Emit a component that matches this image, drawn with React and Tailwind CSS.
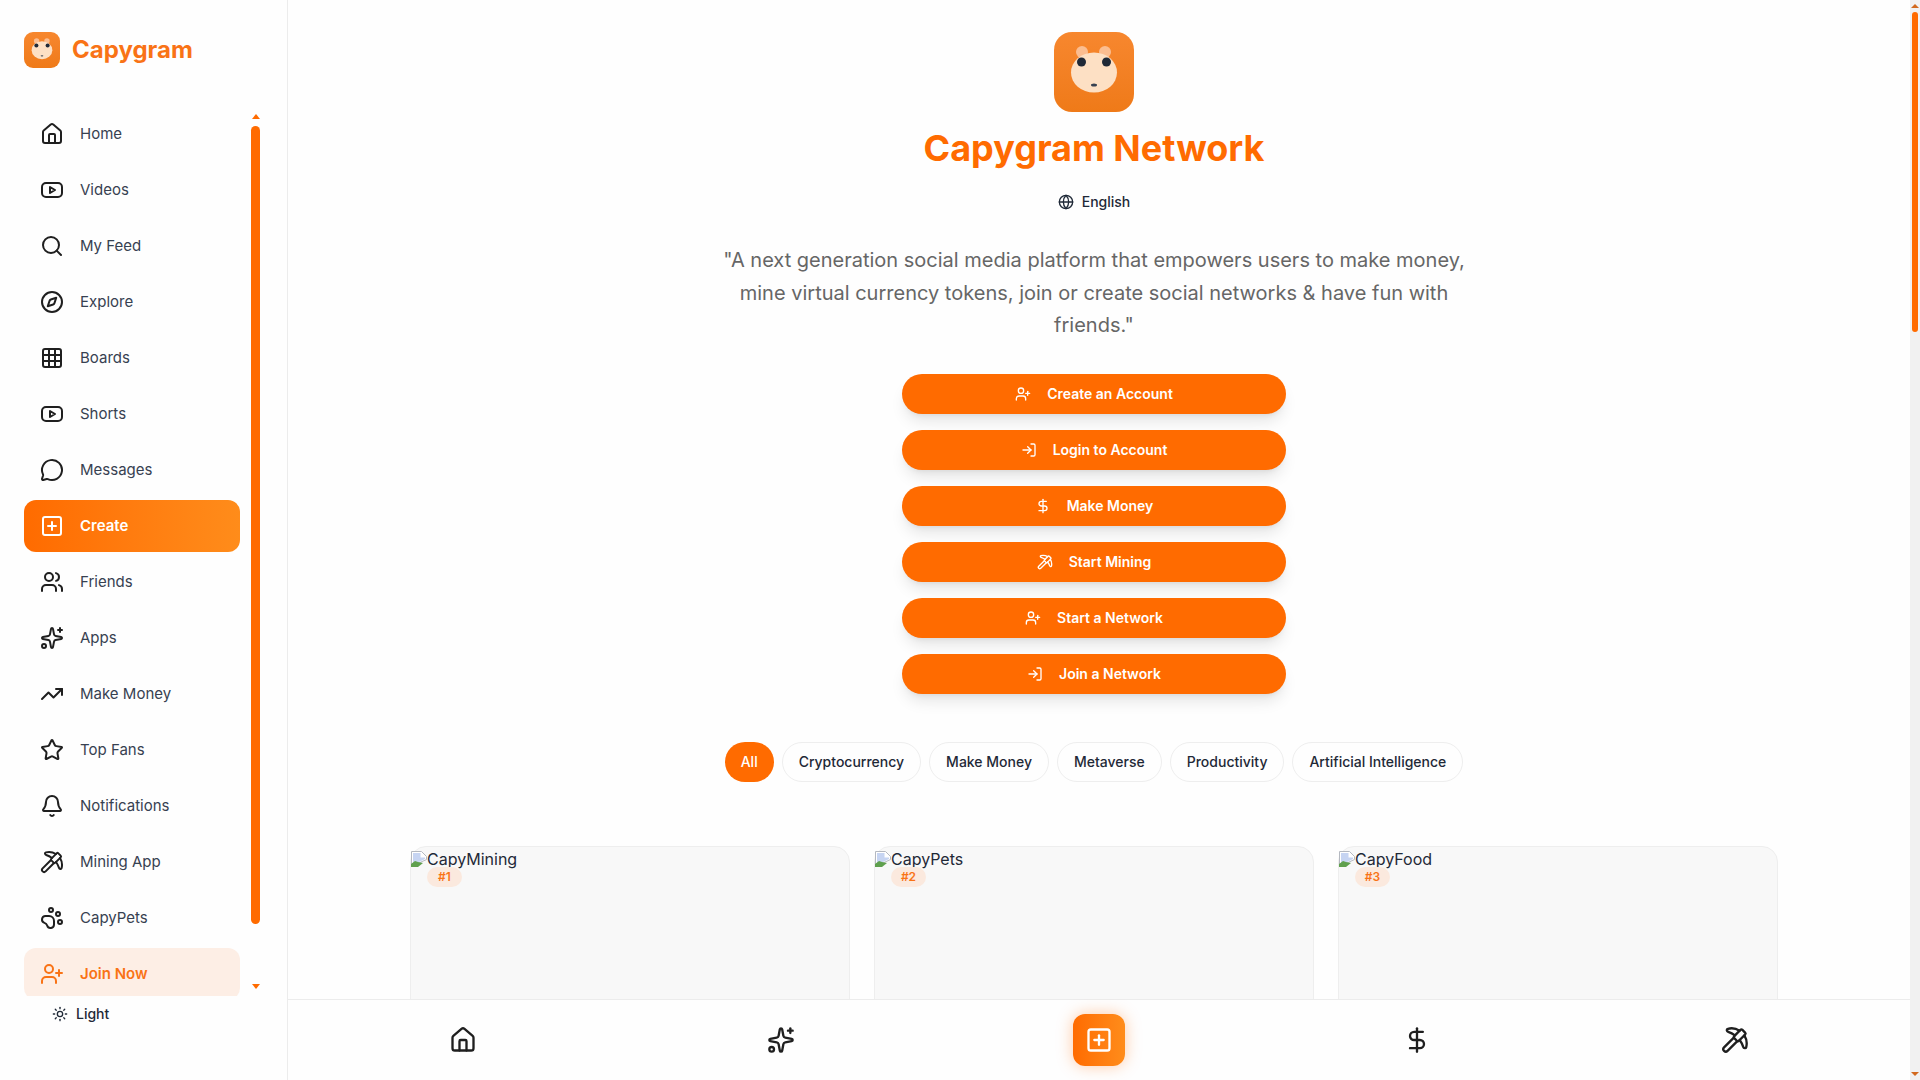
import React from 'react';
import {
  Bell,
  Compass,
  DollarSign,
  Globe,
  Grid3x3,
  House,
  LogIn,
  MessageCircle,
  PawPrint,
  Pickaxe,
  Search,
  Sparkles,
  SquarePlus,
  Star,
  Sun,
  TrendingUp,
  UserPlus,
  Users,
} from 'lucide-react';

// Wide rounded rect with a play triangle, lucide has no exact match
const VideoIcon = ({ className }) => (
  <svg viewBox="0 0 24 24" fill="none" stroke="currentColor" strokeWidth="2" strokeLinecap="round" strokeLinejoin="round" className={className}>
    <rect x="2" y="5" width="20" height="14" rx="4" />
    <path d="M10 9l5 3-5 3z" />
  </svg>
);

const Logo = ({ className }) => (
  <div className={`bg-gradient-to-b from-[#f7872e] to-[#ef7a18] shrink-0 ${className}`}>
    <svg viewBox="0 0 80 80" className="w-full h-full">
      <circle cx="28" cy="20" r="6" fill="#fbbd90" />
      <circle cx="51" cy="20" r="6" fill="#fbbd90" />
      <ellipse cx="40" cy="40.5" rx="23" ry="20" fill="#fde0c4" />
      <circle cx="27.5" cy="30" r="4.5" fill="#1f2937" />
      <circle cx="52.5" cy="30" r="4.5" fill="#1f2937" />
      <ellipse cx="40" cy="53" rx="3" ry="1.5" fill="#374151" />
    </svg>
  </div>
);

// Browser's broken image glyph, shown where the card pictures failed to load
const BrokenImage = () => (
  <svg viewBox="0 0 16 16" className="w-4 h-4 inline-block align-[-2px]">
    <path d="M0.5 15.5v-15h10l5 5v3z" fill="#fff" stroke="#b4b8c0" />
    <path d="M2 14V2h7.5v4.5H14v1.5z" fill="#c6d4f2" />
    <path d="M0 16v-3l4-3 3 1 5 1-5 4z" fill="#5fa04e" />
  </svg>
);

const navItems = [
  { label: 'Home', icon: House },
  { label: 'Videos', icon: VideoIcon },
  { label: 'My Feed', icon: Search },
  { label: 'Explore', icon: Compass },
  { label: 'Boards', icon: Grid3x3 },
  { label: 'Shorts', icon: VideoIcon },
  { label: 'Messages', icon: MessageCircle },
  { label: 'Create', icon: SquarePlus, active: true },
  { label: 'Friends', icon: Users },
  { label: 'Apps', icon: Sparkles },
  { label: 'Make Money', icon: TrendingUp },
  { label: 'Top Fans', icon: Star },
  { label: 'Notifications', icon: Bell },
  { label: 'Mining App', icon: Pickaxe },
  { label: 'CapyPets', icon: PawPrint },
  { label: 'Join Now', icon: UserPlus, join: true },
];

const actions = [
  { label: 'Create an Account', icon: UserPlus },
  { label: 'Login to Account', icon: LogIn },
  { label: 'Make Money', icon: DollarSign },
  { label: 'Start Mining', icon: Pickaxe },
  { label: 'Start a Network', icon: UserPlus },
  { label: 'Join a Network', icon: LogIn },
];

const categories = ['Cryptocurrency', 'Make Money', 'Metaverse', 'Productivity', 'Artificial Intelligence'];

const cards = [
  { name: 'CapyMining', rank: '#1' },
  { name: 'CapyPets', rank: '#2' },
  { name: 'CapyFood', rank: '#3' },
];

const NavItem = ({ item }) => {
  const Icon = item.icon;
  let tone = 'text-[#374151] font-normal';
  let iconTone = 'text-[#1f1f1f]';
  if (item.active) {
    tone = 'bg-gradient-to-r from-[#ff6b00] to-[#ff8c1a] text-white font-semibold';
    iconTone = 'text-white';
  } else if (item.join) {
    tone = 'bg-[#fdeee5] text-[#f97316] font-semibold';
    iconTone = 'text-[#f97316]';
  }
  return (
    <div className={`flex items-center gap-4 h-[52px] px-4 rounded-xl text-[15px] shrink-0 ${tone}`}>
      <Icon className={`w-6 h-6 shrink-0 ${iconTone}`} />
      <span>{item.label}</span>
    </div>
  );
};

const Sidebar = () => (
  <aside className="w-[288px] shrink-0 h-screen flex flex-col bg-[#fefefe] border-r border-[#ececec]">
    <div className="flex gap-3 pl-6 pt-8 h-[108px] items-start">
      <Logo className="w-9 h-9 rounded-[9px]" />
      <span className="text-2xl font-bold text-[#f97316] leading-9">Capygram</span>
    </div>
    <div className="flex h-[888px] pl-6">
      <nav className="w-[216px] flex flex-col gap-1 overflow-hidden">
        {navItems.map((item) => (
          <NavItem key={item.label} item={item} />
        ))}
      </nav>
      <div className="w-[9px] ml-[11px] flex flex-col items-center">
        <div className="mt-[6px] w-0 h-0 border-x-[4.5px] border-x-transparent border-b-[5px] border-b-[#ff6b00]" />
        <div className="mt-[7px] w-[9px] h-[798px] rounded-full bg-[#ff6b00]" />
        <div className="mt-[60px] w-0 h-0 border-x-[4.5px] border-x-transparent border-t-[5px] border-t-[#ff6b00]" />
      </div>
    </div>
    <div className="flex items-center gap-2 pl-[52px] mt-2 text-sm font-medium text-[#1f2937]">
      <Sun className="w-4 h-4 shrink-0" />
      <span>Light</span>
    </div>
  </aside>
);

const BottomBar = () => (
  <div className="h-[81px] shrink-0 grid grid-cols-5 px-4 bg-[#fefefe] border-t border-[#ececec] text-[#1f1f1f]">
    <div className="flex items-center justify-center"><House className="w-7 h-7" /></div>
    <div className="flex items-center justify-center"><Sparkles className="w-7 h-7" /></div>
    <div className="flex items-center justify-center">
      <div className="w-[52px] h-[52px] rounded-xl flex items-center justify-center bg-gradient-to-r from-[#ff6b00] to-[#ff8c1a] shadow-[0_0_16px_rgba(255,107,0,0.35)] text-white">
        <SquarePlus className="w-7 h-7" />
      </div>
    </div>
    <div className="flex items-center justify-center"><DollarSign className="w-7 h-7" /></div>
    <div className="flex items-center justify-center"><Pickaxe className="w-7 h-7" /></div>
  </div>
);

const Main = () => (
  <main className="flex-1 h-screen min-w-0 flex flex-col bg-[#fefefe]">
    <div className="flex-1 min-h-0 overflow-hidden pr-[10px]">
      <div className="flex flex-col items-center pt-8">
        <Logo className="w-20 h-20 rounded-[18px]" />
        <h1 className="mt-4 text-4xl leading-10 font-bold text-[#ff6b00]">Capygram Network</h1>
        <div className="mt-6 flex items-center gap-2 h-5 text-sm font-medium text-[#1f2937]">
          <Globe className="w-4 h-4" />
          <span>English</span>
        </div>
        <p className="mt-8 w-[768px] text-center text-xl leading-[32.5px] text-[#666666]">
          "A next generation social media platform that empowers users to make money, mine virtual currency tokens, join or create social networks &amp; have fun with friends."
        </p>
        <div className="mt-8 w-[384px] flex flex-col gap-4">
          {actions.map(({ label, icon: Icon }) => (
            <button key={label} className="h-10 rounded-full bg-[#ff6b00] text-white text-sm font-semibold flex items-center justify-center gap-4 shadow-lg shadow-black/10">
              <Icon className="w-4 h-4" />
              <span>{label}</span>
            </button>
          ))}
        </div>
        <div className="mt-12 flex gap-2">
          <span className="h-10 px-4 rounded-full bg-[#ff6b00] text-white text-sm font-medium flex items-center">All</span>
          {categories.map((c) => (
            <span key={c} className="h-10 px-4 rounded-full border border-[#eeeeee] text-[#1f2937] text-sm font-medium flex items-center">{c}</span>
          ))}
        </div>
        <div className="mt-16 w-[1368px] grid grid-cols-3 gap-6">
          {cards.map((card) => (
            <div key={card.name} className="relative h-[400px] rounded-2xl border border-[#eeeeee] bg-[#f8f8f8] text-[#1f2937] leading-5">
              <div className="pt-[2px]"><BrokenImage />{card.name}</div>
              <span className="absolute left-4 top-[20px] h-5 w-[35px] rounded-full bg-[#fbe9de] text-[#f97316] text-xs font-semibold flex items-center justify-center">{card.rank}</span>
            </div>
          ))}
        </div>
      </div>
    </div>
    <BottomBar />
  </main>
);

const PageScrollbar = () => (
  <div className="w-[10px] shrink-0 h-screen bg-[#f1f1f1] flex flex-col items-center">
    <div className="mt-[4px] w-0 h-0 border-x-[4px] border-x-transparent border-b-[4px] border-b-[#d2691e]" />
    <div className="mt-[4px] w-[6px] h-[320px] rounded-full bg-[#ff6b00]" />
    <div className="mt-auto mb-[4px] w-0 h-0 border-x-[4px] border-x-transparent border-t-[4px] border-t-[#d2691e]" />
  </div>
);

export default function App() {
  return (
    <div className="flex h-screen overflow-hidden bg-[#fefefe] font-['Inter',sans-serif]">
      <Sidebar />
      <Main />
      <PageScrollbar />
    </div>
  );
}
